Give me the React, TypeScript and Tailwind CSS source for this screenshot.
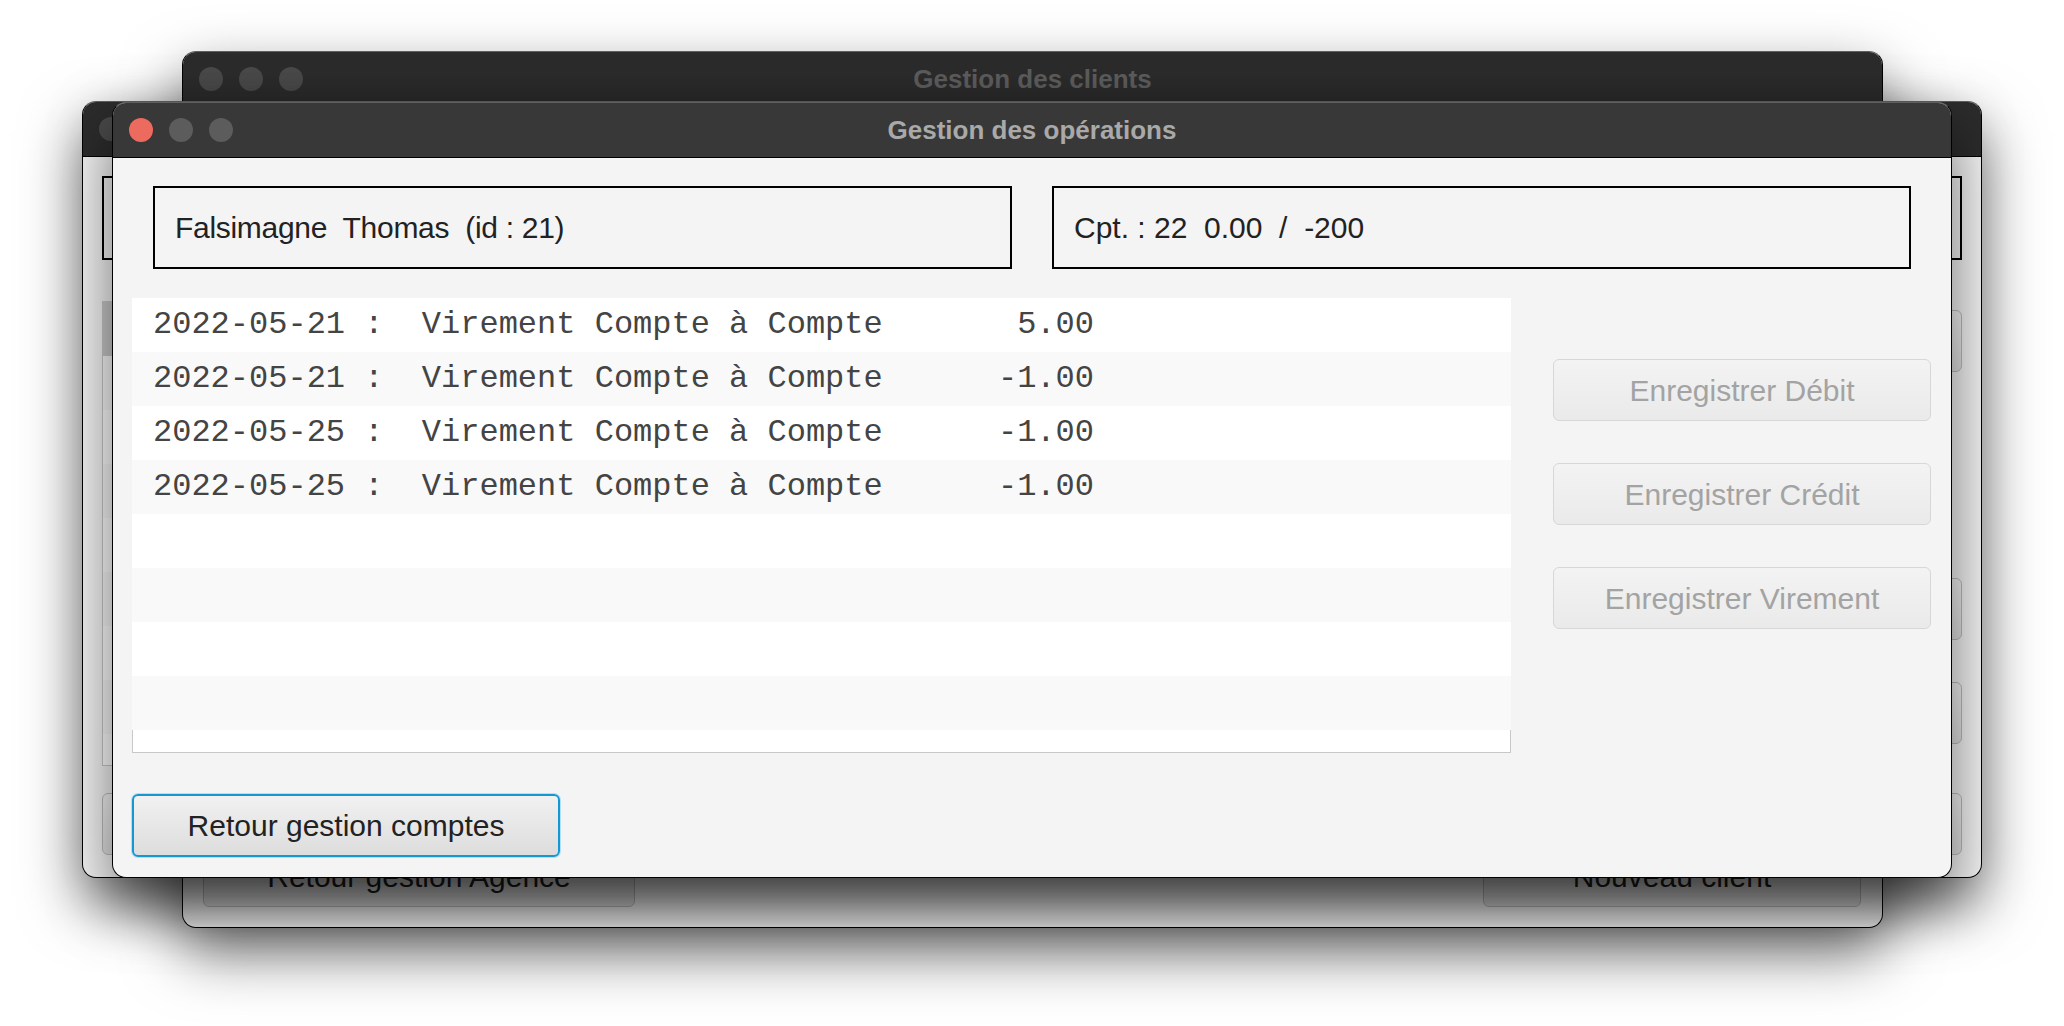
import type { ReactNode } from "react";

const ui = "font-['Liberation_Sans',Arial,sans-serif]";
const mono = "font-['Liberation_Mono','Courier_New',monospace]";

const operations = [
  "2022-05-21 :  Virement Compte à Compte       5.00",
  "2022-05-21 :  Virement Compte à Compte      -1.00",
  "2022-05-25 :  Virement Compte à Compte      -1.00",
  "2022-05-25 :  Virement Compte à Compte      -1.00",
  "",
  "",
  "",
  "",
];

const Lights = ({ active }: { active?: boolean }) => (
  <div className="flex gap-[16px] pl-[16px]">
    <span className={`h-[24px] w-[24px] rounded-full ${active ? "bg-[#ed6a5e]" : "bg-[#4a4a4a]"}`} />
    <span className={`h-[24px] w-[24px] rounded-full ${active ? "bg-[#5c5c5c]" : "bg-[#4a4a4a]"}`} />
    <span className={`h-[24px] w-[24px] rounded-full ${active ? "bg-[#5c5c5c]" : "bg-[#4a4a4a]"}`} />
  </div>
);

const Window = ({
  className,
  title,
  active,
  children,
}: {
  className: string;
  title?: string;
  active?: boolean;
  children: ReactNode;
}) => (
  <div
    className={`absolute flex flex-col overflow-hidden rounded-[14px] border border-black border-t-[#5f5f5f] bg-[#f4f4f4] shadow-[0_25px_60px_rgba(0,0,0,0.55)] ${ui} ${className}`}
  >
    <div
      className={`grid h-[55px] shrink-0 grid-cols-[1fr_auto_1fr] items-center border-b border-black ${
        active ? "bg-[#383838] text-[#a9a9a9]" : "bg-[#2c2c2c] text-[#5e5e5e]"
      }`}
    >
      <Lights active={active} />
      <span className="text-[26px] font-bold">{title}</span>
      <span />
    </div>
    {children}
  </div>
);

const DisabledButton = ({ label }: { label: string }) => (
  <button
    disabled
    className="flex h-[62px] w-full items-center justify-center rounded-[6px] border-[1.5px] border-[#d7d7d7] bg-linear-to-b from-[#f3f3f3] to-[#eaeaea] text-[30px] text-[#a3a3a3]"
  >
    {label}
  </button>
);

const PlainButton = ({ label, className }: { label?: string; className: string }) => (
  <button
    className={`flex h-[62px] items-center justify-center rounded-[6px] border-[1.5px] border-[#bdbdbd] bg-linear-to-b from-[#f4f4f4] to-[#e2e2e2] text-[30px] text-[#1e1e1e] ${className}`}
  >
    {label}
  </button>
);

const App = () => {
  return (
    <div className="relative h-[1026px] w-[2064px] overflow-hidden bg-white">
      {/* back window : Gestion des clients */}
      <Window className="left-[182px] top-[51px] h-[877px] w-[1701px] z-10" title="Gestion des clients">
        <div className="flex flex-1 flex-col justify-end pb-[20px] pl-[20px] pr-[21px]">
          <div className="flex justify-between">
            <PlainButton label="Retour gestion Agence" className="w-[432px]" />
            <PlainButton label="Nouveau client" className="w-[378px]" />
          </div>
        </div>
      </Window>

      {/* middle window : gestion des comptes (mostly hidden) */}
      <Window className="left-[82px] top-[101px] h-[777px] w-[1900px] z-20">
        <div className="flex flex-1 flex-col px-[19px] pt-[19px] pb-[20px]">
          <div className="grid grid-cols-2 gap-[40px]">
            <div className="h-[84px] border-2 border-black" />
            <div className="h-[84px] border-2 border-black" />
          </div>
          <div className="mt-[41px] flex h-[465px] gap-[42px]">
            <div className="flex w-[1379px] flex-col border-x border-b border-[#c8c8c8] bg-white">
              <div className="h-[55px] bg-[#c9c9c9]" />
              <div className="h-[54px] bg-[#f9f9f9]" />
              <div className="h-[54px] bg-white" />
              <div className="h-[54px] bg-[#f9f9f9]" />
              <div className="h-[54px] bg-white" />
              <div className="h-[54px] bg-[#f9f9f9]" />
              <div className="h-[54px] bg-white" />
              <div className="h-[54px] bg-[#f9f9f9]" />
            </div>
            <div className="flex flex-1 flex-col pt-[9px]">
              <PlainButton className="w-full" />
              <PlainButton className="mt-[206px] w-full" />
              <PlainButton className="mt-[42px] w-full" />
            </div>
          </div>
          <div className="mt-[27px] flex justify-between">
            <PlainButton className="w-[428px]" />
            <PlainButton className="w-[378px]" />
          </div>
        </div>
      </Window>

      {/* front window : Gestion des opérations */}
      <Window className="left-[112px] top-[102px] h-[776px] w-[1840px] z-30" title="Gestion des opérations" active>
        <div className="flex flex-1 flex-col px-[19px] pt-[28px] pb-[20px]">
          <div className="grid grid-cols-2 gap-[40px] px-[21px]">
            <div className="flex h-[83px] items-center whitespace-pre border-2 border-black px-[20px] text-[30px] tracking-[-0.3px] text-[#222]">
              Falsimagne  Thomas  (id : 21)
            </div>
            <div className="flex h-[83px] items-center whitespace-pre border-2 border-black px-[20px] text-[30px] text-[#222]">
              Cpt. : 22  0.00  /  -200
            </div>
          </div>

          <div className="mt-[29px] flex h-[455px] gap-[42px]">
            <div className="flex w-[1379px] flex-col border-x border-b border-[#c8c8c8] bg-white">
              <div className="-mx-px">
                {operations.map((op, i) => (
                  <div
                    key={i}
                    className={`flex h-[54px] items-center whitespace-pre pl-[21px] text-[32px] text-[#444] ${mono} ${
                      i % 2 === 0 ? "bg-white" : "bg-[#f9f9f9]"
                    }`}
                  >
                    {op}
                  </div>
                ))}
              </div>
            </div>
            <div className="flex flex-1 flex-col gap-[42px] pt-[61px] pr-px">
              <DisabledButton label="Enregistrer Débit" />
              <DisabledButton label="Enregistrer Crédit" />
              <DisabledButton label="Enregistrer Virement" />
            </div>
          </div>

          <div className="mt-[41px]">
            <button className="flex h-[63px] w-[428px] items-center justify-center rounded-[6px] border-2 border-[#1497d5] bg-linear-to-b from-[#f1f1f1] to-[#dddddd] text-[30px] text-[#222] ring-1 ring-[#b6def2]">
              Retour gestion comptes
            </button>
          </div>
        </div>
      </Window>
    </div>
  );
};

export default App;
